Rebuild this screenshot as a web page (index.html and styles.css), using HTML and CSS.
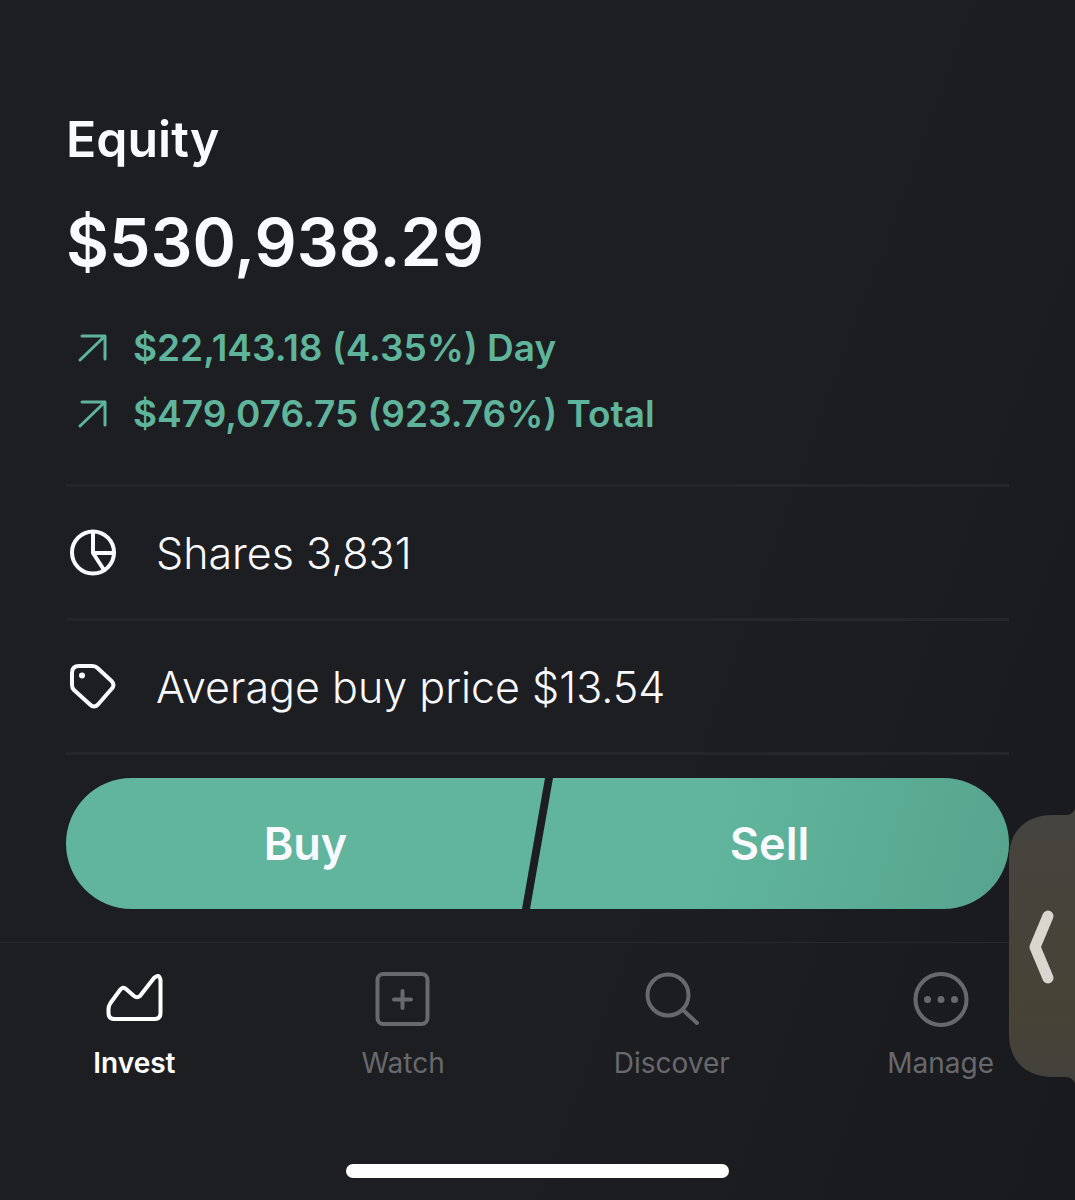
FILE: index.html
```html
<!DOCTYPE html>
<html lang="en">
<head>
    <meta charset="utf-8" />
    <meta name="viewport" content="width=device-width, initial-scale=1.0" />
    <title>Equity</title>
    <link rel="stylesheet" href="styles.css">
</head>
<body>

    <main class="container">
        <h1 class="title">Equity</h1>
        <p class="balance">$530,938.29</p>

        <div class="gains">
            <p class="gain">
                <svg class="arrow" viewBox="0 0 32 32" aria-hidden="true"><path d="M5 4h23v23M28 4L3 28" /></svg>
                <span>$22,143.18 (4.35%) Day</span>
            </p>
            <p class="gain">
                <svg class="arrow" viewBox="0 0 32 32" aria-hidden="true"><path d="M5 4h23v23M28 4L3 28" /></svg>
                <span>$479,076.75 (923.76%) Total</span>
            </p>
        </div>

        <ul class="details">
            <li>
                <svg class="icon" viewBox="0 0 48 48" aria-hidden="true"><circle cx="24" cy="23.500" r="21" /><path d="M24 3v21h21M24 24l11 17" /></svg>
                <span>Shares 3,831</span>
            </li>
            <li>
                <svg class="icon" viewBox="0 0 48 48" aria-hidden="true"><path d="M10 3h13.500q3 0 5 2l14 13q4 4 0 8L29 41.500q-4 4-8 0L5 27q-2-2-2-5V10q0-7 7-7z" /><circle class="dot" cx="13" cy="12.500" r="3" /></svg>
                <span>Average buy price $13.54</span>
            </li>
        </ul>

        <div class="actions">
            <button type="button" class="buy">Buy</button>
            <button type="button" class="sell">Sell</button>
        </div>
    </main>

    <footer>
        <nav class="tabs">
            <a href="#invest" class="tab active">
                <svg viewBox="0 0 60 60"><path d="M4.500 39q0-3 2-6L16 20q3-4 6-1l8 7q3 2.500 6 0L50 8q5-5 6.500 2v33q0 6-6 6h-40q-6 0-6-6z" /></svg>
                <span>Invest</span>
            </a>
            <a href="#watch" class="tab">
                <svg viewBox="0 0 60 60"><rect x="4.500" y="4" width="50" height="50" rx="6" /><path d="M29.500 21v17M21 29.500h17" /></svg>
                <span>Watch</span>
            </a>
            <a href="#discover" class="tab">
                <svg viewBox="0 0 60 60"><circle cx="26" cy="25" r="20.500" /><path d="M41 40l14 13" /></svg>
                <span>Discover</span>
            </a>
            <a href="#manage" class="tab">
                <svg viewBox="0 0 60 60"><circle cx="30" cy="29.500" r="25.500" /><g class="dot"><circle cx="16.500" cy="29.500" r="3.500" /><circle cx="30" cy="29.500" r="3.500" /><circle cx="43.500" cy="29.500" r="3.500" /></g></svg>
                <span>Manage</span>
            </a>
        </nav>
        <div class="home-bar"></div>

        <button type="button" class="handle" aria-label="Open side panel">
            <svg viewBox="0 0 66 274">
                <defs>
                    <linearGradient id="panel" x1="0" y1="0" x2="0" y2="1">
                        <stop offset="0" stop-color="#46443f" />
                        <stop offset="0.75" stop-color="#464336" />
                        <stop offset="1" stop-color="#43413c" />
                    </linearGradient>
                </defs>
                <path fill="url(#panel)" d="M66 0q-3 6-9 6H44C18 6 0 21 0 49v176c0 28 18 43 44 43h13q6 0 9 6z" />
                <path class="chevron" d="M39 107L26 138L39 169" />
            </svg>
        </button>
    </footer>

</body>
</html>
```
FILE: styles.css
```css
* {
    box-sizing: border-box;
}

body {
    font-family: Inter, "Liberation Sans", sans-serif;
    background: linear-gradient(110deg, #1d1e22 60%, #191a1d);
    color: #f9faff;
    margin: 0;
    display: flex;
    flex-direction: column;
    min-height: 100vh;
}

h1, p, ul {
    margin: 0;
    padding: 0;
}

svg {
    fill: none;
    stroke: currentColor;
    stroke-width: 4px;
    stroke-linecap: round;
    stroke-linejoin: round;
    display: block;
    flex: none;
}

svg .dot {
    fill: currentColor;
    stroke: none;
}

.container {
    flex: 1;
    padding: 109px 66px 32px;
}

.title {
    font-size: 50px;
    line-height: 60px;
    font-weight: 600;
}

.balance {
    font-size: 66px;
    line-height: 80px;
    font-weight: 600;
    margin-top: 33px;
}

.gains {
    margin: 33px 0 37px;
    color: #5fb49c;
}

.gain {
    display: flex;
    align-items: center;
    gap: 24px;
    padding-left: 11px;
    font-size: 37px;
    line-height: 66px;
    font-weight: 600;
}

.arrow {
    width: 32px;
    height: 32px;
    stroke-width: 3px;
}

.details {
    list-style: none;
    border-bottom: 3px solid #25262a;
}

.details li {
    display: flex;
    align-items: center;
    gap: 39px;
    height: 134px;
    padding-left: 3px;
    border-top: 3px solid #25262a;
    font-size: 43px;
    font-weight: 300;
}

.icon {
    width: 48px;
    height: 48px;
}

.actions {
    display: flex;
    margin-top: 23px;
}

.actions button {
    flex: 1;
    height: 131px;
    border: none;
    padding: 0;
    background-color: #60b59c;
    color: #f9faff;
    font-family: inherit;
    font-size: 45px;
    font-weight: 600;
    cursor: pointer;
}

.actions .buy {
    border-radius: 66px 0 0 66px;
    clip-path: polygon(0 0, 100% 0, calc(100% - 23px) 100%, 0 100%);
}

.actions .sell {
    margin-left: -15px;
    border-radius: 0 66px 66px 0;
    background: linear-gradient(105deg, #60b59c 40%, #57a48d);
    clip-path: polygon(23px 0, 100% 0, 100% 100%, 0 100%);
}

footer {
    position: relative;
    border-top: 1px solid #28292d;
    padding: 27px 0 22px;
}

.tabs {
    display: flex;
}

.tab {
    flex: 1;
    display: flex;
    flex-direction: column;
    align-items: center;
    gap: 16px;
    color: #68696d;
    font-size: 28px;
    line-height: 34px;
    text-decoration: none;
}

.tab svg {
    width: 60px;
    height: 60px;
}

.tab.active {
    color: #fff;
    font-weight: 600;
}

.home-bar {
    width: 383px;
    height: 14px;
    margin: 84px auto 0;
    border-radius: 7px;
    background-color: #fff;
}

/* pull-out handle on the right edge, lies over the tab bar */
.handle {
    position: absolute;
    right: 0;
    top: -134px;
    border: none;
    padding: 0;
    background: none;
    cursor: pointer;
}

.handle svg {
    width: 66px;
    height: 274px;
    stroke: none;
}

.handle .chevron {
    stroke: #d9d6cf;
    stroke-width: 11px;
}
```
